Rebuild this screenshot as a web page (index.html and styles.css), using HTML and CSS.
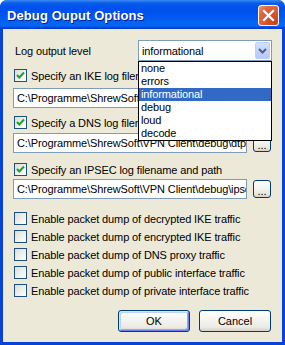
FILE: index.html
```html
<!DOCTYPE html>
<html>
<head>
<meta charset="utf-8">
<link rel="stylesheet" href="styles.css">
</head>
<body>
<div class="window">
  <div class="titlebar">
    <span class="title">Debug Ouput Options</span>
    <span class="close">
      <svg width="13" height="13" viewBox="0 0 13 13"><path d="M2 2 L11 11 M11 2 L2 11" stroke="#fff" stroke-width="2.2" stroke-linecap="square" fill="none"/></svg>
    </span>
  </div>
  <div class="client">
    <div class="level-row">
      <span class="label">Log output level</span>
      <div class="combo">
        <span class="combo-text">informational</span>
        <span class="combo-btn"><svg width="9" height="6" viewBox="0 0 9 6"><path d="M1 1 L4.5 4.5 L8 1" stroke="#4d6185" stroke-width="2" fill="none"/></svg></span>
        <ul class="listbox">
          <li>none</li>
          <li>errors</li>
          <li class="sel">informational</li>
          <li>debug</li>
          <li>loud</li>
          <li>decode</li>
        </ul>
      </div>
    </div>

    <div class="check on cb-ike"><span class="box"><svg width="11" height="11" viewBox="0 0 11 11"><path d="M2 5 L4.3 7.5 L9 2.5" stroke="#21a121" stroke-width="2" fill="none"/></svg></span><span class="ctext">Specify an IKE log filename and path</span></div>
    <div class="path-row pr-ike"><div class="field">C:\Programme\ShrewSoft\VPN Client\debug\iked.log</div><button class="browse">...</button></div>

    <div class="check on cb-dns"><span class="box"><svg width="11" height="11" viewBox="0 0 11 11"><path d="M2 5 L4.3 7.5 L9 2.5" stroke="#21a121" stroke-width="2" fill="none"/></svg></span><span class="ctext">Specify a DNS log filename and path</span></div>
    <div class="path-row pr-dns"><div class="field">C:\Programme\ShrewSoft\VPN Client\debug\dtp.log</div><button class="browse">...</button></div>

    <div class="check on cb-ipsec"><span class="box"><svg width="11" height="11" viewBox="0 0 11 11"><path d="M2 5 L4.3 7.5 L9 2.5" stroke="#21a121" stroke-width="2" fill="none"/></svg></span><span class="ctext">Specify an IPSEC log filename and path</span></div>
    <div class="path-row pr-ipsec"><div class="field">C:\Programme\ShrewSoft\VPN Client\debug\ipsecd.log</div><button class="browse">...</button></div>

    <div class="dumps">
      <div class="check"><span class="box"></span><span class="ctext">Enable packet dump of decrypted IKE traffic</span></div>
      <div class="check"><span class="box"></span><span class="ctext">Enable packet dump of encrypted IKE traffic</span></div>
      <div class="check"><span class="box"></span><span class="ctext">Enable packet dump of DNS proxy traffic</span></div>
      <div class="check"><span class="box"></span><span class="ctext">Enable packet dump of public interface traffic</span></div>
      <div class="check"><span class="box"></span><span class="ctext">Enable packet dump of private interface traffic</span></div>
    </div>

    <div class="actions">
      <button class="btn default">OK</button>
      <button class="btn">Cancel</button>
    </div>
  </div>
</div>
</body>
</html>
```

FILE: styles.css
```css
html, body {
  margin: 0;
  padding: 0;
  background: #ffffff;
}
body {
  font-family: "Liberation Sans", Arial, sans-serif;
  font-size: 11px;
  letter-spacing: -0.12px;
  color: #000;
}
.window {
  width: 285px;
  height: 345px;
  display: flex;
  flex-direction: column;
  background: #0842d6;
  border-radius: 7px 7px 0 0;
  overflow: hidden;
}
.titlebar {
  height: 29px;
  flex: none;
  display: flex;
  align-items: center;
  justify-content: space-between;
  padding: 0 6px 0 7px;
  box-sizing: border-box;
  background: linear-gradient(180deg, #3b8cf5 0, #0a5fe7 3px, #0053ee 6px, #0050ee 12px, #0466f4 24px, #0466f4 26px, #003dd7 28px, #003dd7 29px);
}
.title {
  color: #fff;
  font-weight: bold;
  font-size: 13px;
  text-shadow: 1px 1px 0 #0f1d8a;
  letter-spacing: 0.1px;
  margin-top: 1px;
}
.close {
  width: 19px;
  height: 19px;
  border: 1px solid #fff;
  border-radius: 3px;
  display: flex;
  align-items: center;
  justify-content: center;
  background: radial-gradient(circle at 85% 85%, #c8401c 0, #d8542c 40%, #e06a45 75%, #f0a084 100%);
  margin-top: 1px;
}
.client {
  flex: 1;
  margin: 0 3px 3px 3px;
  background: #ece9d8;
  padding: 11px 10px 0 10px;
  position: relative;
}
.level-row {
  display: flex;
  align-items: center;
  justify-content: space-between;
  height: 21px;
}
.label {
  padding-left: 2px;
}
.combo {
  position: relative;
  width: 134px;
  height: 21px;
  box-sizing: border-box;
  border: 1px solid #7f9db9;
  background: #fff;
  display: flex;
  align-items: center;
  justify-content: space-between;
}
.combo-text {
  padding-left: 3px;
}
.combo-btn {
  width: 15px;
  height: 17px;
  margin-right: 1px;
  border-radius: 2px;
  background: linear-gradient(180deg, #d4e0fb 0, #c2d3fa 50%, #b6c9f6 100%);
  border: 1px solid #bccdf7;
  box-sizing: border-box;
  display: flex;
  align-items: center;
  justify-content: center;
}
.listbox {
  position: absolute;
  left: -1px;
  top: 20px;
  width: 134px;
  height: 80px;
  box-sizing: border-box;
  margin: 0;
  padding: 0;
  list-style: none;
  background: #fff;
  border: 1px solid #000;
  z-index: 5;
}
.listbox li {
  height: 13px;
  line-height: 13px;
  padding-left: 2px;
}
.listbox li.sel {
  background: #316ac5;
  color: #fff;
}
.check {
  display: flex;
  align-items: center;
  height: 13px;
  margin-left: 1px;
}
.box {
  width: 13px;
  height: 13px;
  box-sizing: border-box;
  border: 1px solid #1c5180;
  background: linear-gradient(135deg, #dcdcd7 0, #f5f5f3 70%, #ffffff 100%);
  display: flex;
  align-items: center;
  justify-content: center;
  flex: none;
}
.ctext {
  margin-left: 4px;
  white-space: nowrap;
}
.cb-ike { margin-top: 8px; }
.pr-ike { margin-top: 6px; }
.cb-dns { margin-top: 8px; }
.pr-dns { margin-top: 4px; }
.cb-ipsec { margin-top: 10px; }
.pr-ipsec { margin-top: 3px; }
.path-row {
  display: flex;
  align-items: center;
  height: 20px;
}
.field {
  width: 234px;
  height: 20px;
  box-sizing: border-box;
  border: 1px solid #7f9db9;
  background: #fff;
  white-space: nowrap;
  overflow: hidden;
  padding-left: 3px;
  line-height: 18px;
}
.browse {
  margin-left: 6px;
  width: 18px;
  height: 18px;
  padding: 4px 0 0 0;
  box-sizing: border-box;
  font-family: inherit;
  font-size: 11px;
  line-height: 12px;
  border: 1px solid #003c74;
  border-radius: 3px;
  background: linear-gradient(180deg, #ffffff 0, #f3f3ef 50%, #e6e4dc 85%, #d6d0c5 100%);
  color: #000;
}
.dumps {
  margin-top: 13px;
  display: flex;
  flex-direction: column;
  gap: 5px;
}
.actions {
  margin-top: 13px;
  display: flex;
  justify-content: flex-end;
  gap: 9px;
  padding-right: 1px;
}
.btn {
  width: 72px;
  height: 22px;
  padding: 0;
  font-family: inherit;
  font-size: 11px;
  color: #000;
  border: 1px solid #003c74;
  border-radius: 3px;
  background: linear-gradient(180deg, #ffffff 0, #f4f4f0 45%, #ecebe6 80%, #d6d0c5 100%);
}
.btn.default {
  box-shadow: inset 1px 1px 0 #cee7ff, inset -1px -1px 0 #6982ee, inset 2px 2px 0 #bcd4f6, inset -2px -2px 0 #89ade4;
}
```
